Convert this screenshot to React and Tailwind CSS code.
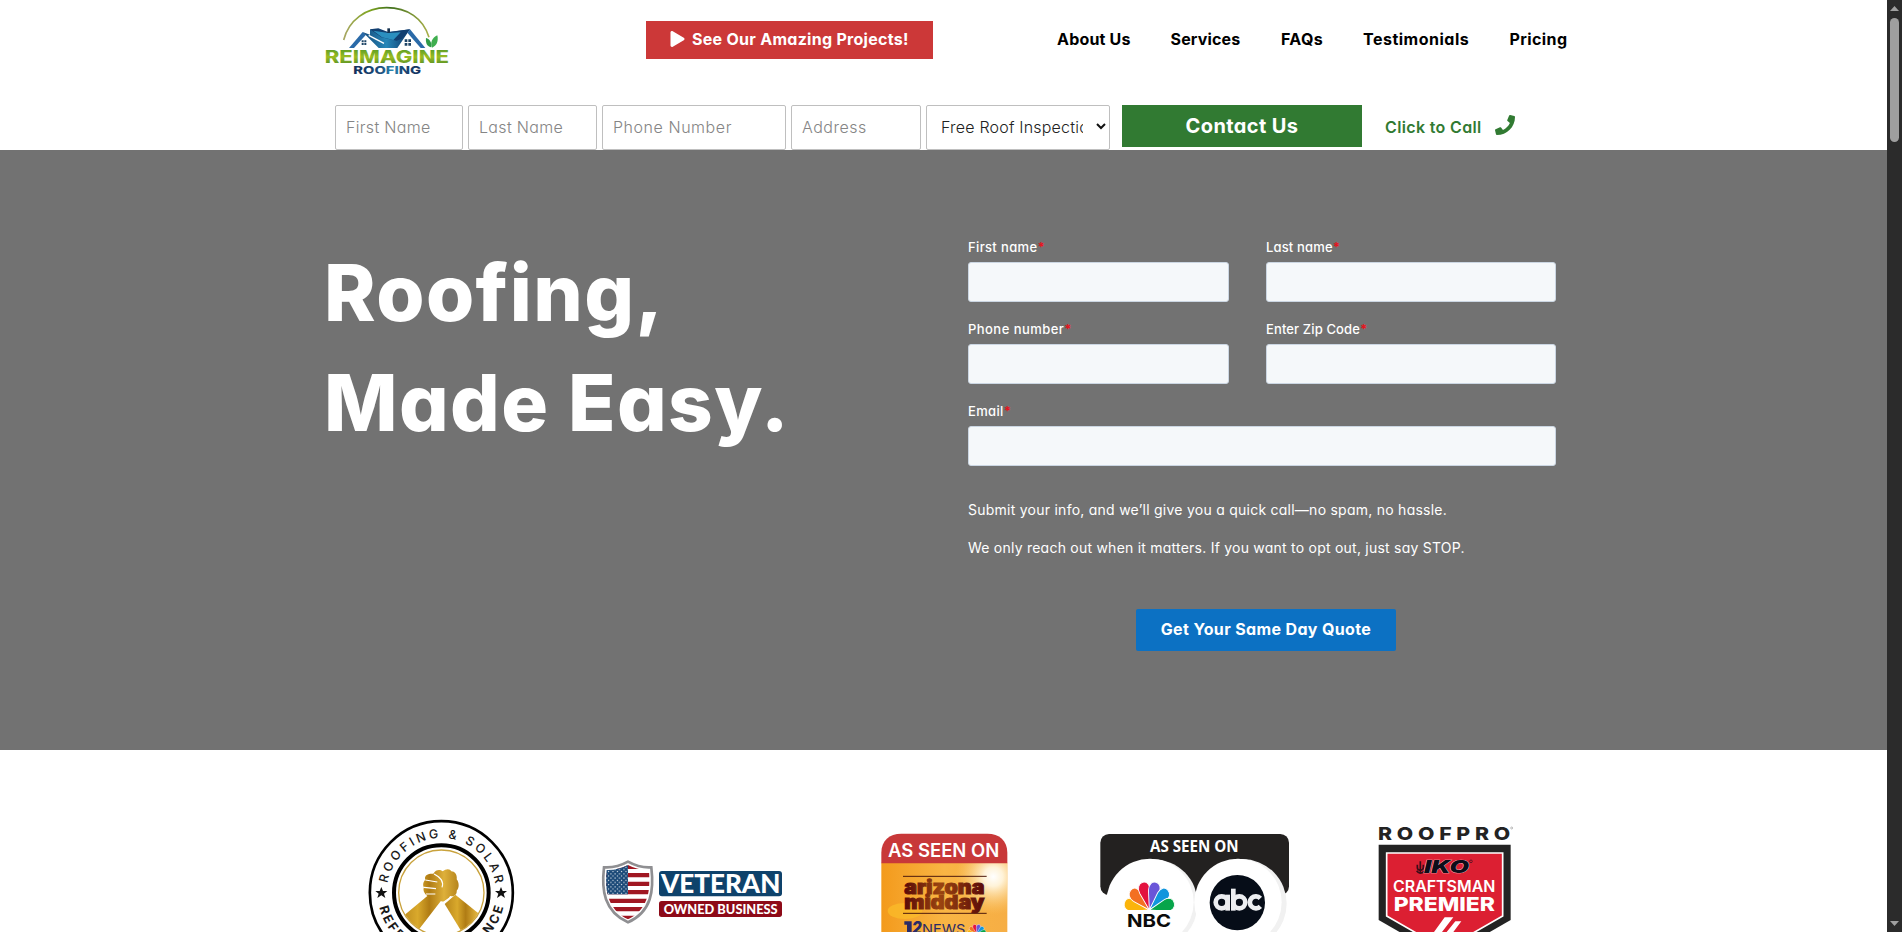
import { FaPlay, FaPhone } from "react-icons/fa";

const NAV = [
  { label: "About Us", cls: "w-[113.5px] tracking-[0.18px]" },
  { label: "Services", cls: "w-[110.5px] tracking-[0.16px]" },
  { label: "FAQs", cls: "w-[82px] tracking-[0.35px]" },
  { label: "Testimonials", cls: "w-[146.5px] tracking-[0.5px]" },
  { label: "Pricing", cls: "w-[60px] tracking-[0.4px]" },
];

function Logo() {
  return (
    <svg className="h-[78px] w-[125px]" viewBox="45 0 375 234">
      <defs>
        <linearGradient id="arc" x1="0" x2="1"><stop offset="0" stopColor="#a9a765" /><stop offset=".3" stopColor="#7fa51f" /><stop offset=".55" stopColor="#3f6f1c" /><stop offset="1" stopColor="#a9b04a" /></linearGradient>
        <linearGradient id="green" x1="0" x2="0" y1="0" y2="1"><stop offset="0" stopColor="#4a9428" /><stop offset=".5" stopColor="#9cbd22" /><stop offset="1" stopColor="#3f8228" /></linearGradient>
        <linearGradient id="roof" x1="0" x2="1"><stop offset="0" stopColor="#14497a" /><stop offset=".5" stopColor="#2787b8" /><stop offset="1" stopColor="#0e3566" /></linearGradient>
        <linearGradient id="roofing" x1="0" x2="1"><stop offset="0" stopColor="#12305c" /><stop offset=".4" stopColor="#1c4d7c" /><stop offset=".6" stopColor="#2b8fb8" /><stop offset=".7" stopColor="#1c4d7c" /><stop offset="1" stopColor="#12305c" /></linearGradient>
      </defs>
      <path d="M101 120 C116 60 168 23 230 23 C292 23 340 55 357 112" fill="none" stroke="url(#arc)" strokeWidth="5" />
      <path d="M117 144 L158 96 L168 104 L132 144 Z" fill="#2a6aa8" />
      <path d="M158 96 L180 104 L180 88 L234 97 L300 88 L262 144 L206 144 Z" fill="url(#roof)" />
      <path d="M180 88 L205 85 L234 96 L300 88 L276 116 L260 122 L214 112 Z" fill="#123f70" />
      <path d="M190 92 L236 99 L272 97 L250 120 L216 112 Z" fill="#2b8fbf" />
      <path d="M300 88 L346 144 L332 144 L292 98 Z" fill="#2a6aa8" />
      <rect x="232" y="85" width="8" height="14" fill="#16324f" />
      <path d="M176 106 L222 130" stroke="#fff" strokeWidth="4" />
      <path d="M155 121h6v6h-6zM163 121h6v6h-6zM155 129h6v6h-6zM163 129h6v6h-6zM284 118h8v8h-8zM295 118h8v8h-8zM284 129h8v8h-8zM295 129h8v8h-8z" fill="#1d4466" />
      <path d="M348 114 C360 118 366 128 364 142 C352 140 346 130 348 114Z" fill="#2f9a48" />
      <path d="M382 106 C386 124 380 138 366 143 C360 128 366 114 382 106Z" fill="#3fae4f" />
      <text x="44" y="189" fontSize="50" fontWeight="800" fontFamily="Inter, sans-serif" textLength="373" lengthAdjust="spacingAndGlyphs" fill="url(#green)">REIMAGINE</text>
      <text x="130" y="221" fontSize="32" fontWeight="800" fontFamily="Inter, sans-serif" textLength="203" lengthAdjust="spacingAndGlyphs" fill="url(#roofing)">ROOFING</text>
    </svg>
  );
}

function AllianceBadge() {
  return (
    <svg className="h-[122px] w-[230px]" viewBox="0 30 690 366">
      <defs>
        <linearGradient id="gold" x1="0" x2="1"><stop offset="0" stopColor="#b8861b" /><stop offset=".3" stopColor="#d9a92c" /><stop offset=".5" stopColor="#b07c14" /><stop offset=".75" stopColor="#deb03a" /><stop offset="1" stopColor="#b5841d" /></linearGradient>
        <path id="top-arc" d="M110 278 A164 164 0 0 1 438 278" />
        <path id="bottom-arc" d="M83 278 A191 191 0 0 0 465 278" />
        <clipPath id="disc"><circle cx="274" cy="278" r="127" /></clipPath>
      </defs>
      <circle cx="274" cy="278" r="214.500" fill="#fff" stroke="#000" strokeWidth="8" />
      <circle cx="274" cy="278" r="142" fill="#fff" stroke="#000" strokeWidth="12" />
      <circle cx="274" cy="278" r="128" fill="none" stroke="#c9a23c" strokeWidth="4" />
      <g clipPath="url(#disc)" fill="url(#gold)">
        <path d="M284 312 L316 284 L410 360 L350 420 Z" />
        <path d="M150 356 L232 288 C222 280 218 270 222 262 C216 254 222 242 226 240 C222 228 230 220 250 221 C258 208 270 208 278 214 C288 206 300 206 304 214 C316 214 322 226 320 238 C328 248 328 264 320 272 C322 284 310 292 300 288 C296 302 282 306 272 304 L190 410 Z" />
        <path d="M226 240 L262 246 M222 262 L258 266 M228 282 L256 282 M252 222 C272 232 282 246 276 262 M304 290 L282 306" fill="none" stroke="#fff" strokeWidth="3.500" />
      </g>
      <g fontFamily="Inter, sans-serif" fill="#1a1a1a">
        <text fontSize="37" fontWeight="500"><textPath href="#top-arc" startOffset="28" textLength="460">ROOFING &amp; SOLAR</textPath></text>
        <text fontSize="38" fontWeight="700"><textPath href="#bottom-arc" startOffset="44" textLength="512">REFERRAL ALLIANCE</textPath></text>
      </g>
      <path d="M94 261 l5 12 h13 l-10 8 l4 13 l-12 -8 l-12 8 l4 -13 l-10 -8 h13 z" fill="#111" />
      <path d="M453 261 l5 12 h13 l-10 8 l4 13 l-12 -8 l-12 8 l4 -13 l-10 -8 h13 z" fill="#111" />
    </svg>
  );
}

function VeteranBadge() {
  return (
    <svg className="h-[122px] w-[260px]" viewBox="-30 -90 780 366">
      <defs>
        <clipPath id="shield"><path d="M50 90 C74 91 96 84 114 75 C132 84 152 91 177 90 C182 150 176 208 114 238 C52 208 44 150 50 90 Z" /></clipPath>
        <pattern id="stars" width="13" height="13" patternUnits="userSpaceOnUse"><circle cx="4" cy="4" r="1.900" fill="#fff" /><circle cx="10.500" cy="10.500" r="1.900" fill="#fff" /></pattern>
      </defs>
      <path d="M42 82 C70 84 94 76 114 65 C134 76 158 84 184 82 C192 150 186 214 114 247 C42 214 34 150 42 82 Z" fill="#fff" stroke="#8f8f92" strokeWidth="8" />
      <g clipPath="url(#shield)">
        <rect x="40" y="70" width="150" height="180" fill="#fff" />
        <path d="M40 70h150v17H40zM40 99h150v13H40zM40 125h150v13H40zM40 150h150v13H40zM40 176h150v13H40zM40 201h150v13H40zM40 227h150v20H40z" fill="#a01722" />
        <rect x="40" y="70" width="74" height="93" fill="#1c4a78" />
        <rect x="40" y="70" width="74" height="93" fill="url(#stars)" />
      </g>
      <rect x="207" y="93" width="369" height="76" rx="9" fill="#0e426b" />
      <rect x="207" y="183" width="369" height="48" rx="8" fill="#8d0a18" />
      <text x="213" y="158" fontSize="78" fontWeight="900" fontFamily="Lato, sans-serif" textLength="358" lengthAdjust="spacingAndGlyphs" fill="#fff">VETERAN</text>
      <text x="221" y="221" fontSize="38" fontWeight="900" fontFamily="Lato, sans-serif" textLength="342" lengthAdjust="spacingAndGlyphs" fill="#fff">OWNED BUSINESS</text>
    </svg>
  );
}

const FEATHERS = [
  { a: -76, c: "#fbb40b" },
  { a: -46, c: "#f37021" },
  { a: -15, c: "#e3123f" },
  { a: 15, c: "#6a55d8" },
  { a: 46, c: "#1196dd" },
  { a: 76, c: "#07a54b" },
];

function Peacock() {
  return FEATHERS.map((f) => (
    <path key={f.a} d="M0 0 L-18 -56 C-22 -74 -14 -86 0 -86 C14 -86 22 -74 18 -56 Z" fill={f.c} stroke="#fff" strokeWidth="3" transform={`rotate(${f.a})`} />
  ));
}

function MiddayBadge() {
  return (
    <svg className="h-[122px] w-[220px]" viewBox="-60 0 660 366">
      <defs>
        <linearGradient id="sky" x1="0" x2="1"><stop offset="0" stopColor="#f39a1c" /><stop offset=".5" stopColor="#f9b544" /><stop offset="1" stopColor="#f6ae45" /></linearGradient>
        <radialGradient id="sun" cx="400" cy="200" r="115" gradientUnits="userSpaceOnUse"><stop offset="0" stopColor="#fff" /><stop offset=".25" stopColor="#fff3d8" /><stop offset="1" stopColor="#fbc765" stopOpacity="0" /></radialGradient>
        <linearGradient id="maroon" x1="0" x2="1"><stop offset="0" stopColor="#5a0a08" /><stop offset=".45" stopColor="#9a4410" /><stop offset="1" stopColor="#5a0a08" /></linearGradient>
      </defs>
      <rect x="64" y="158" width="378" height="208" fill="url(#sky)" />
      <ellipse cx="135" cy="303" rx="52" ry="24" fill="#fbbd2a" opacity=".7" />
      <rect x="275" y="158" width="167" height="208" fill="url(#sun)" />
      <path d="M64 160 V128 C64 92 88 71 124 71 H382 C418 71 442 92 442 128 V160 Z" fill="#c83839" />
      <text x="84" y="142" fontSize="54" fontWeight="600" fontFamily="Inter, sans-serif" textLength="334" lengthAdjust="spacingAndGlyphs" fill="#fff">AS SEEN ON</text>
      <path d="M129 199 H380 M129 310 H380" stroke="#4d1a0c" strokeWidth="3" />
      <g fontFamily="Inter, sans-serif" fontWeight="900" fill="url(#maroon)" stroke="url(#maroon)" strokeWidth="3">
        <text x="133" y="252" fontSize="56" textLength="240" lengthAdjust="spacingAndGlyphs">arizona</text>
        <text x="133" y="296" fontSize="56" textLength="240" lengthAdjust="spacingAndGlyphs">midday</text>
      </g>
      <path d="M133 334 h22 v32 h-14 v-22 h-8 z" fill="#2b2b66" />
      <text x="156" y="371" fontSize="50" fontWeight="900" fontStyle="italic" fontFamily="Inter, sans-serif" textLength="29" lengthAdjust="spacingAndGlyphs" fill="#2b2b66">2</text>
      <text x="186" y="372" fontSize="41" fontFamily="Inter, sans-serif" textLength="130" lengthAdjust="spacingAndGlyphs" fill="#2b2b66">NEWS</text>
      <g transform="translate(350 371) scale(.33)"><Peacock /></g>
    </svg>
  );
}

function NetworksBadge() {
  return (
    <svg className="h-[122px] w-[270px]" viewBox="-60 0 810 366">
      <rect x="61" y="72" width="566" height="183" rx="26" fill="#232120" />
      <circle cx="486" cy="281" r="134" fill="#f1f1f1" />
      <circle cx="220" cy="281" r="133" fill="#f1f1f1" />
      <circle cx="474" cy="277" r="131" fill="#fff" />
      <circle cx="210" cy="277" r="131" fill="#fff" />
      <text x="210" y="127" fontSize="49" fontWeight="700" fontFamily="Open Sans, sans-serif" textLength="266" lengthAdjust="spacingAndGlyphs" fill="#fff">AS SEEN ON</text>
      <g transform="translate(208 300) scale(.9 1)"><Peacock /></g>
      <path d="M130 300 h156 v12 h-156z" fill="#fff" />
      <text x="141" y="352" fontSize="54" fontWeight="700" fontFamily="Inter, sans-serif" textLength="132" lengthAdjust="spacingAndGlyphs" fill="#0b0b0b">NBC</text>
      <circle cx="472" cy="278" r="83" fill="#060d18" />
      <g fill="none" stroke="#eceef1" strokeWidth="14">
        <circle cx="425" cy="277" r="18" /><path d="M443 254 v48" />
        <circle cx="478" cy="277" r="18" /><path d="M460 236 v66" />
        <path d="M541 265 a18 18 0 1 0 0 24" />
      </g>
    </svg>
  );
}

function IkoBadge() {
  return (
    <svg className="h-[122px] w-[230px]" viewBox="-60 0 690 366">
      <g transform="translate(84 90) scale(1.18 1)">
        <text fontSize="54" fontWeight="800" fontFamily="Inter, sans-serif" textLength="336" fill="#232323">ROOFPRO</text>
      </g>
      <circle cx="485" cy="54" r="3" fill="none" stroke="#444" strokeWidth="1" />
      <path d="M86 104 H482 V330 L284 444 L86 330 Z" fill="#232323" />
      <path d="M110 129 H458 V318 L284 418 L110 318 Z" fill="#dc1f32" stroke="#fff" strokeWidth="5" />
      <path d="M211 154 v38 M202 164 v8 a9 9 0 0 0 18 0 v-8 M200 182 q10 14 22 2" fill="none" stroke="#3a0d18" strokeWidth="5" />
      <text x="222" y="189" fontSize="51" fontWeight="900" fontStyle="italic" fontFamily="Inter, sans-serif" textLength="135" lengthAdjust="spacingAndGlyphs" fill="#0d0d1a" stroke="#f5c9cc" strokeWidth="2" paintOrder="stroke">IKO</text>
      <circle cx="363" cy="154" r="4" fill="none" stroke="#0d0d1a" strokeWidth="1.500" />
      <text x="129" y="247" fontSize="46" fontWeight="600" fontFamily="Inter, sans-serif" textLength="307" lengthAdjust="spacingAndGlyphs" fill="#fff">CRAFTSMAN</text>
      <text x="131" y="303" fontSize="58" fontWeight="800" fontFamily="Inter, sans-serif" textLength="304" lengthAdjust="spacingAndGlyphs" fill="#fff">PREMIER</text>
      <path d="M284 322 H310 L276 366 H252 Z M316 334 H334 L310 366 H290 Z" fill="#fff" />
    </svg>
  );
}

function QuickInput({ className, placeholder }) {
  return (
    <div className={`flex h-[45px] items-center rounded-[2px] border border-[#bfbfbf] bg-white pb-[2px] pl-[10px] text-[16px] font-light text-[#858585] ${className}`}>
      {placeholder}
    </div>
  );
}

function Field({ label, className }) {
  return (
    <label className={`flex flex-col ${className}`}>
      <span className="h-[29px] text-[13px] leading-[28px] font-medium text-white">
        {label}<span className="font-bold text-[#e51520]">*</span>
      </span>
      <span className="mb-[13px] h-[40px] rounded-[3px] border border-[#cbd6e2] bg-[#f5f8fa]" />
    </label>
  );
}

export default function App() {
  return (
    <div className="flex h-[932px] w-[1902px] overflow-hidden bg-white font-[Inter,sans-serif] [font-feature-settings:'cv11']">
      <main className="w-[1887px]">
        <header className="h-[150px]">
          <div className="flex h-[105px] pl-[325px]">
            <Logo />
            <a className="mt-[21px] ml-[196px] flex h-[38px] w-[287px] items-center bg-[#cc3838] pb-[2px] pl-[24px] text-[16px] font-bold tracking-[0.28px] text-white">
              <FaPlay className="mr-[7px] h-[16px] w-[15px]" />
              See Our Amazing Projects!
            </a>
            <nav className="mt-[21px] ml-[124px] flex h-[36px] items-center text-[16px] font-bold text-black">
              {NAV.map((n) => <a key={n.label} className={n.cls}>{n.label}</a>)}
            </nav>
          </div>
          <div className="flex gap-[5px] pl-[335px]">
            <QuickInput className="w-[128px] tracking-[0.31px]" placeholder="First Name" />
            <QuickInput className="w-[129px] tracking-[0.33px]" placeholder="Last Name" />
            <QuickInput className="w-[184px] tracking-[0.55px]" placeholder="Phone Number" />
            <QuickInput className="w-[130px] tracking-[0.5px]" placeholder="Address" />
            <div className="flex h-[45px] w-[184px] items-center rounded-[2px] border border-[#bfbfbf] pb-[2px] pl-[14px] text-[16px] font-light text-[#222]">
              <span className="w-[142px] overflow-hidden tracking-[0.2px] whitespace-nowrap">Free Roof Inspection</span>
              <svg className="ml-[13px] h-[7px] w-[10px]" viewBox="0 0 10 7"><path d="M1 1l4 4l4-4" fill="none" stroke="#111" strokeWidth="2" /></svg>
            </div>
            <a className="ml-[7px] flex h-[42px] w-[240px] items-center justify-center bg-[#317a32] text-[20px] font-bold tracking-[0.4px] text-white">Contact Us</a>
            <a className="ml-[18px] flex h-[45px] items-center pb-[2px] text-[16px] font-semibold tracking-[0.35px] text-[#317a32]">
              Click to Call
              <FaPhone className="mb-[3px] ml-[13px] size-[20px]" />
            </a>
          </div>
        </header>
        <section className="flex h-[600px] bg-[#727272]">
          <h1 className="w-[968px] pt-[88px] pl-[324px] text-[78px] leading-[110px] font-extrabold tracking-[1.4px] text-white">
            Roofing,<br />Made Easy.
          </h1>
          <form className="flex w-[588px] flex-col pt-[83px]">
            <div className="flex justify-between tracking-[0.35px]"><Field className="w-[261px]" label="First name" /><Field className="w-[290px] tracking-[0.15px]" label="Last name" /></div>
            <div className="flex justify-between tracking-[0.45px]"><Field className="w-[261px]" label="Phone number" /><Field className="w-[290px] tracking-[0.12px]" label="Enter Zip Code" /></div>
            <Field className="tracking-[0.35px]" label="Email" />
            <p className="mt-[21px] text-[14px] leading-[20px] tracking-[0.25px] text-white">Submit your info, and we’ll give you a quick call—no spam, no hassle.</p>
            <p className="mt-[18px] text-[14px] leading-[20px] tracking-[0.23px] text-white">We only reach out when it matters. If you want to opt out, just say STOP.</p>
            <button type="button" className="mt-[51px] ml-[168px] h-[42px] w-[260px] rounded-[2px] bg-[#0c71c3] pb-[2px] text-[16px] font-bold tracking-[0.36px] text-white">Get Your Same Day Quote</button>
          </form>
        </section>
        <section className="flex h-[182px] items-end pl-[350px] [font-feature-settings:normal]">
          <AllianceBadge />
          <VeteranBadge />
          <MiddayBadge />
          <NetworksBadge />
          <IkoBadge />
        </section>
      </main>
      <div className="flex w-[15px] flex-col items-center justify-between bg-[#2b2b2b] py-[6px]">
        <div className="flex flex-col items-center">
          <svg className="h-[5px] w-[9px]" viewBox="0 0 9 5"><path d="M0 5L4.500 0L9 5z" fill="#a0a0a0" /></svg>
          <div className="mt-[7px] h-[124px] w-[9px] rounded-full bg-[#9f9f9f]" />
        </div>
        <svg className="h-[5px] w-[9px]" viewBox="0 0 9 5"><path d="M0 0L4.500 5L9 0z" fill="#a0a0a0" /></svg>
      </div>
    </div>
  );
}
